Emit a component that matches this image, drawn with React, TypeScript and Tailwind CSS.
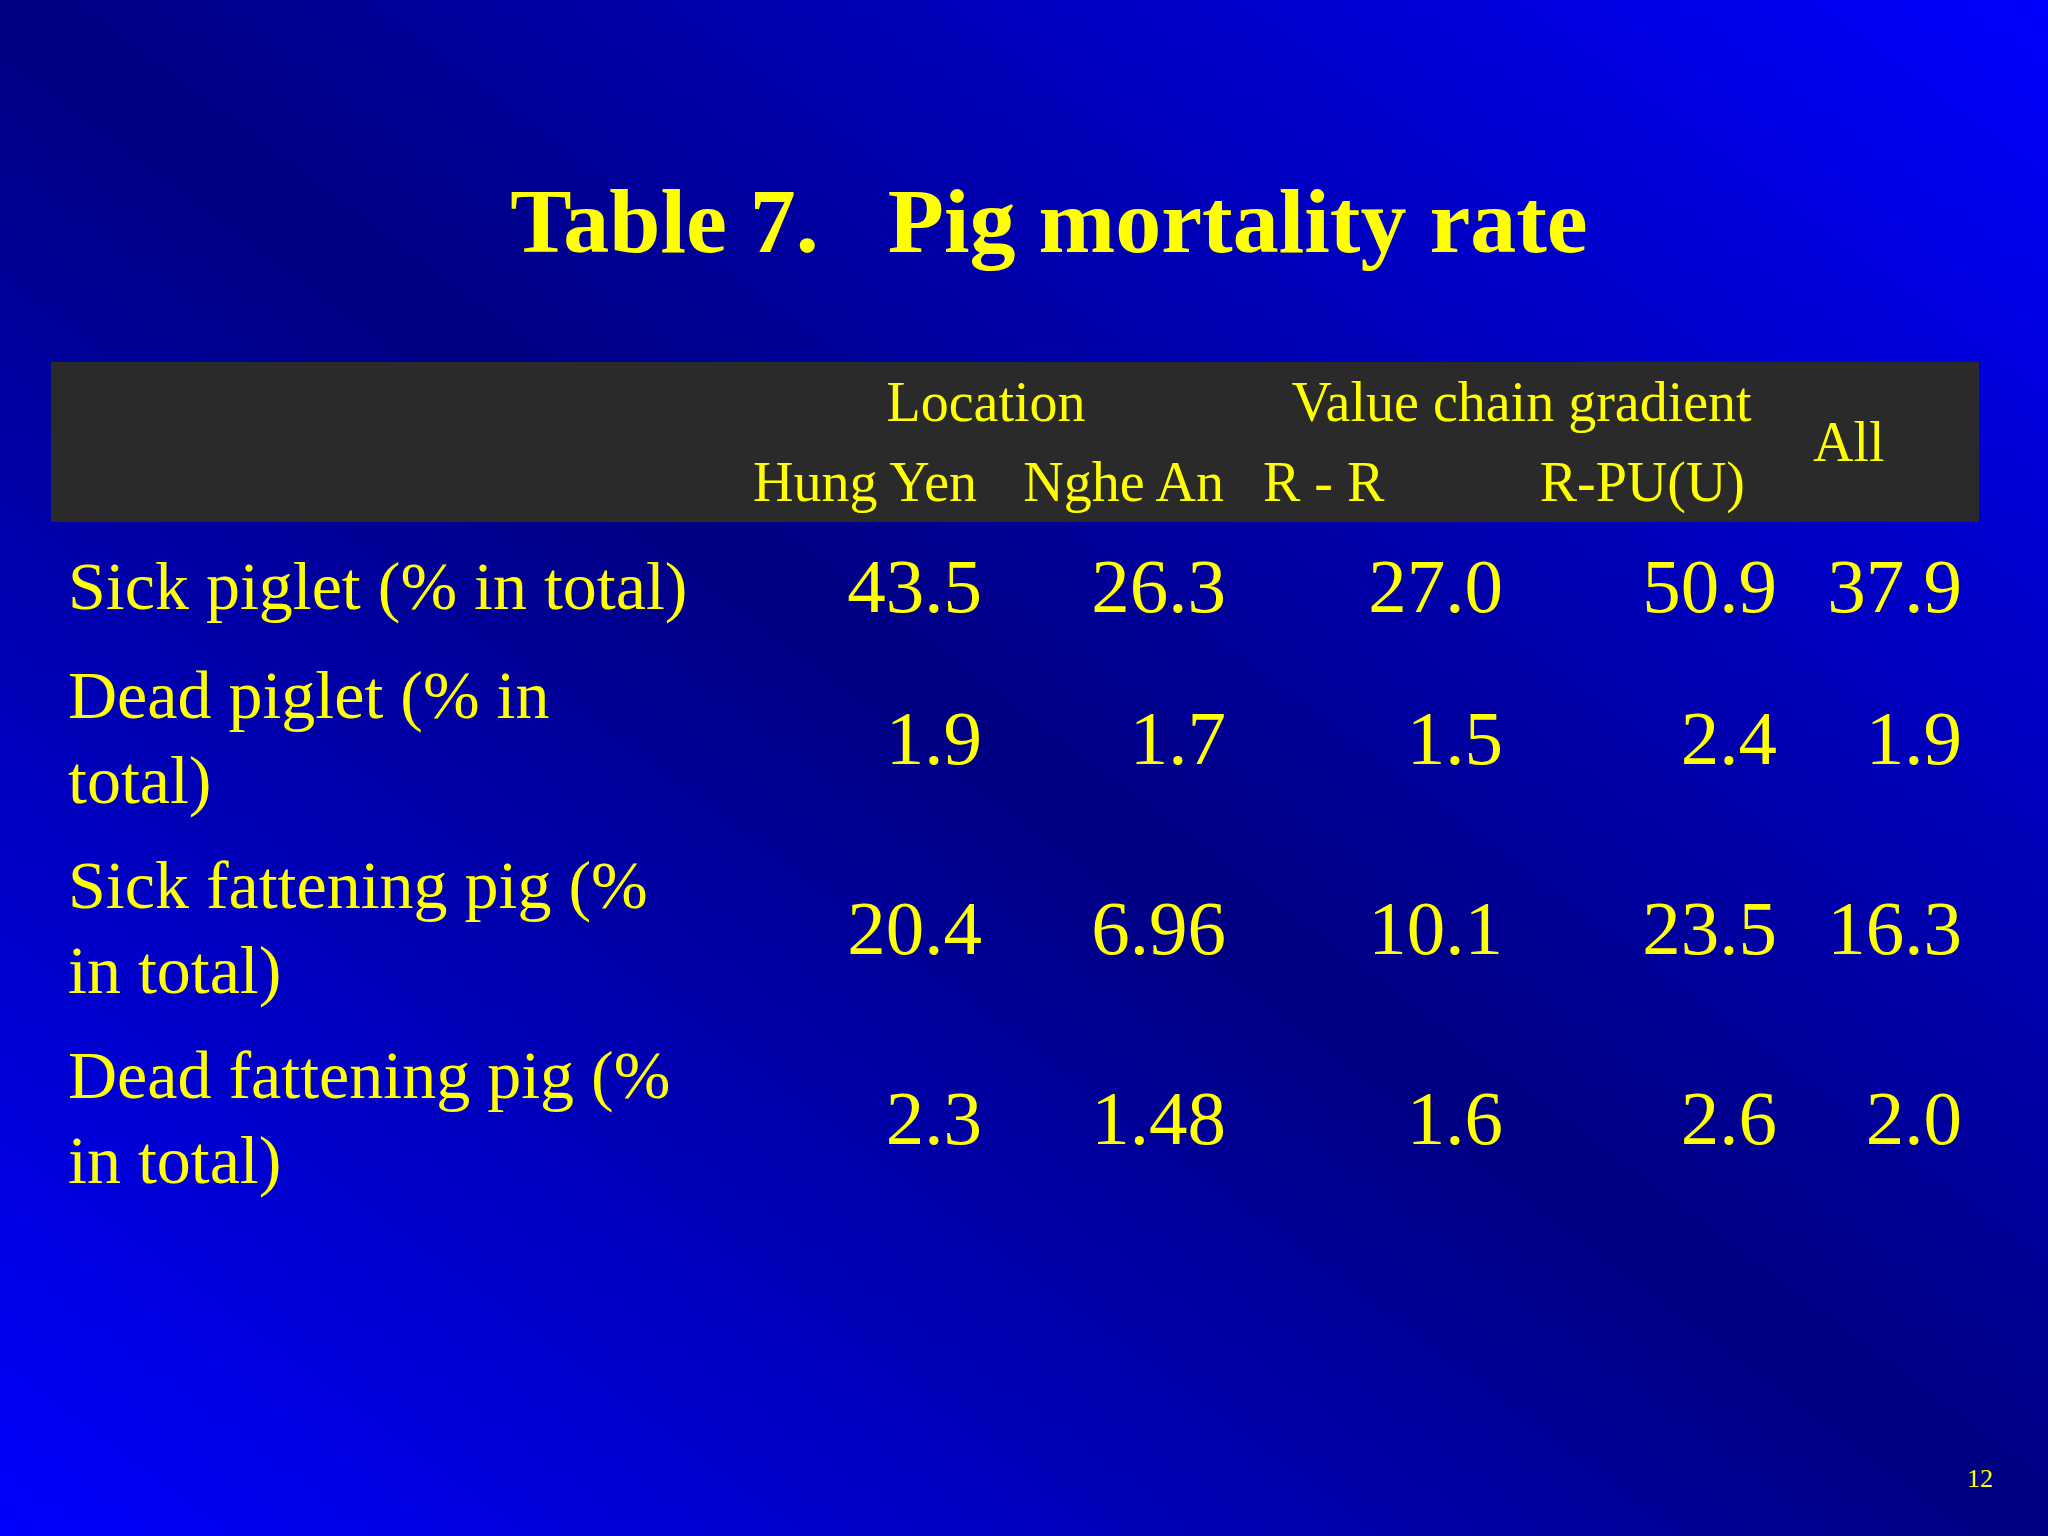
const rows = [
  { label: ["Sick piglet (% in total)"], values: ["43.5", "26.3", "27.0", "50.9", "37.9"] },
  { label: ["Dead piglet (% in", "total)"], values: ["1.9", "1.7", "1.5", "2.4", "1.9"] },
  { label: ["Sick fattening pig (%", "in total)"], values: ["20.4", "6.96", "10.1", "23.5", "16.3"] },
  { label: ["Dead fattening pig (%", "in total)"], values: ["2.3", "1.48", "1.6", "2.6", "2.0"] },
]

const cols = "grid grid-cols-[679px_260px_244px_277px_274px_194px]"

export default function App() {
  return (
    <div
      className="flex h-[1536px] w-[2048px] flex-col bg-[linear-gradient(to_bottom_left,#0000ff,#000082_50%,#0000ff)] text-[#ffff00]"
      style={{ fontFamily: '"Liberation Serif", "Times New Roman", serif' }}
    >
      {/* title */}
      <h1 className="whitespace-pre pt-[175px] pl-[50px] text-center text-[92px] font-bold leading-none">
        Table 7.   Pig mortality rate
      </h1>

      <div className="ml-[51px] mt-[95px] w-[1928px]">
        {/* header bar */}
        <div className={`${cols} grid-rows-[80px_80px] bg-[#2a2a2a] text-[56px] leading-[80px]`}>
          <div className="row-span-2" />
          <div className="col-span-2 pl-[8px] text-center whitespace-nowrap">Location</div>
          <div className="col-span-2 pl-[24px] text-center whitespace-nowrap">Value chain gradient</div>
          <div className="row-span-2 self-center pl-[28px] whitespace-nowrap">All</div>
          <div className="pr-[13px] text-right whitespace-nowrap">Hung Yen</div>
          <div className="pr-[10px] text-right whitespace-nowrap">Nghe An</div>
          <div className="pl-[29px] whitespace-nowrap">R - R</div>
          <div className="pr-[40px] text-right whitespace-nowrap">R-PU(U)</div>
        </div>

        {/* body */}
        <div className="mt-[22px] flex flex-col gap-y-[20px]">
          {rows.map((row, i) => (
            <div key={i} className={`${cols} ${i === 0 ? "mb-[4px]" : ""}`}>
              <div className="pl-[17px] text-[68px] leading-[85px] whitespace-nowrap">
                {row.label.map((line) => (
                  <div key={line}>{line}</div>
                ))}
              </div>
              {row.values.map((v, j) => (
                <div
                  key={j}
                  className={`flex items-center justify-end text-[77px] leading-none ${j === 4 ? "pr-[17px]" : "pr-[8px]"}`}
                >
                  {v}
                </div>
              ))}
            </div>
          ))}
        </div>
      </div>

      {/* slide number */}
      <div className="mt-auto pb-[44px] pr-[55px] text-right text-[26px] leading-none">12</div>
    </div>
  )
}
